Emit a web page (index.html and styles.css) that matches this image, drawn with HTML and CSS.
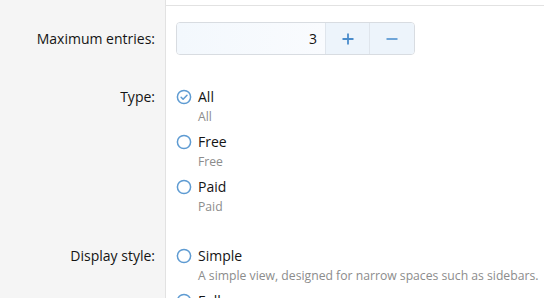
FILE: index.html
```html
<!DOCTYPE html>
<html>
<head>
<meta charset="utf-8">
<link rel="stylesheet" href="styles.css">
</head>
<body>
<div class="form">
  <div class="row row-top">
    <div class="label"></div>
    <div class="field"></div>
  </div>
  <div class="row row-entries">
    <div class="label"><span class="label-text">Maximum entries:</span></div>
    <div class="field">
      <div class="spinner">
        <div class="spin-input">3</div>
        <button class="spin-btn spin-up" type="button">
          <svg width="14" height="14" viewBox="0 0 14 14"><path d="M7 1.5v11M1.5 7h11" stroke="#4a8ccb" stroke-width="1.8" fill="none"/></svg>
        </button>
        <button class="spin-btn spin-down" type="button">
          <svg width="14" height="14" viewBox="0 0 14 14"><path d="M1.5 7h11" stroke="#6fa5d8" stroke-width="1.8" fill="none"/></svg>
        </button>
      </div>
    </div>
  </div>
  <div class="row row-type">
    <div class="label"><span class="label-text">Type:</span></div>
    <div class="field">
      <ul class="choices">
        <li class="choice">
          <div class="choice-line">
            <svg class="radio" width="16" height="16" viewBox="0 0 16 16"><circle cx="8" cy="8" r="6.6" stroke="#5e9bd2" stroke-width="1.5" fill="none"/><path d="M5.1 8.2l2 2 3.9-4" stroke="#5e9bd2" stroke-width="1.5" fill="none" stroke-linecap="round" stroke-linejoin="round"/></svg>
            <span class="choice-text">All</span>
          </div>
          <div class="hint">All</div>
        </li>
        <li class="choice">
          <div class="choice-line">
            <svg class="radio" width="16" height="16" viewBox="0 0 16 16"><circle cx="8" cy="8" r="6.6" stroke="#5e9bd2" stroke-width="1.5" fill="none"/></svg>
            <span class="choice-text">Free</span>
          </div>
          <div class="hint">Free</div>
        </li>
        <li class="choice">
          <div class="choice-line">
            <svg class="radio" width="16" height="16" viewBox="0 0 16 16"><circle cx="8" cy="8" r="6.6" stroke="#5e9bd2" stroke-width="1.5" fill="none"/></svg>
            <span class="choice-text">Paid</span>
          </div>
          <div class="hint">Paid</div>
        </li>
      </ul>
    </div>
  </div>
  <div class="row row-style">
    <div class="label"><span class="label-text">Display style:</span></div>
    <div class="field">
      <ul class="choices">
        <li class="choice">
          <div class="choice-line">
            <svg class="radio" width="16" height="16" viewBox="0 0 16 16"><circle cx="8" cy="8" r="6.6" stroke="#5e9bd2" stroke-width="1.5" fill="none"/></svg>
            <span class="choice-text">Simple</span>
          </div>
          <div class="hint">A simple view, designed for narrow spaces such as sidebars.</div>
        </li>
        <li class="choice">
          <div class="choice-line">
            <svg class="radio" width="16" height="16" viewBox="0 0 16 16"><circle cx="8" cy="8" r="6.6" stroke="#5e9bd2" stroke-width="1.5" fill="none"/></svg>
            <span class="choice-text">Full</span>
          </div>
          <div class="hint">A full size view, displaying more information.</div>
        </li>
      </ul>
    </div>
  </div>
</div>
</body>
</html>
```
FILE: styles.css
```css
html, body {
  margin: 0;
  padding: 0;
  background: #fff;
  overflow: hidden;
}
body {
  font-family: "Open Sans", "Noto Sans", sans-serif;
  font-size: 14px;
  color: #141414;
}
.form {
  display: flex;
  flex-direction: column;
}
.row {
  display: flex;
}
.label {
  width: 155px;
  flex: none;
  background: #f5f5f5;
  border-right: 1px solid #e2e2e2;
  padding-right: 10px;
  text-align: right;
}
.field {
  flex: 1;
  padding-left: 10px;
}
.row-top .field {
  height: 5px;
  border-bottom: 1px solid #e2e2e2;
}
.row-top .label {
  height: 6px;
}
.label-text {
  display: block;
  line-height: 20px;
}
.row-entries .label {
  padding-top: 23px;
}
.row-entries .field {
  padding-top: 16px;
}
.spinner {
  display: flex;
  width: 237px;
  height: 31px;
  border: 1px solid #d8dce1;
  border-radius: 4px;
  overflow: hidden;
}
.spin-input {
  flex: 1;
  background: linear-gradient(to right, #f3f8fd, #f9fbfe);
  text-align: right;
  padding-right: 8px;
  line-height: 31px;
}
.spin-btn {
  width: 44px;
  flex: none;
  border: 0;
  border-left: 1px solid #dfe5ec;
  background: #edf4fb;
  padding: 0;
  display: flex;
  align-items: center;
  justify-content: center;
}
.spin-down {
  width: 45px;
}
.row-type .label {
  padding-top: 32px;
}
.row-type .field {
  padding-top: 32px;
  padding-bottom: 31px;
}
.choices {
  list-style: none;
  margin: 0;
  padding: 0;
  display: flex;
  flex-direction: column;
  gap: 7px;
}
.choice-line {
  display: flex;
  align-items: center;
  gap: 6px;
  height: 20px;
}
.radio {
  flex: none;
}
.choice-text {
  line-height: 20px;
}
.hint {
  padding-left: 22px;
  padding-top: 1px;
  font-size: 12.2px;
  line-height: 17px;
  color: #8c8c8c;
}
.row-style .label {
  padding-top: 0;
}
```
